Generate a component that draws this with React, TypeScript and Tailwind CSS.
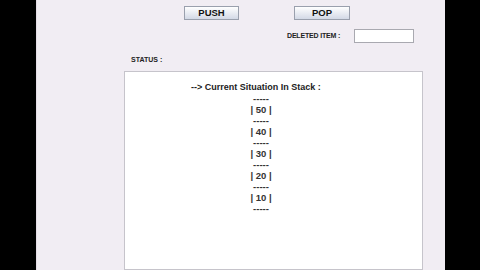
const STACK = [50, 40, 30, 20, 10];

export default function App() {
  return (
    <div
      className="flex h-[270px] w-[480px] overflow-hidden bg-black text-black"
      style={{ fontFamily: '"Liberation Sans", Arial, sans-serif' }}
    >
      <div className="w-[36px] shrink-0 bg-black" />

      <div className="flex w-[409px] flex-col bg-[#f1edf3] border-l border-[#e4dde6]">
        {/* buttons */}
        <div className="flex pt-[6px] pl-[147px]">
          <button className="h-[14px] w-[55px] border border-[#9aa0ad] bg-gradient-to-b from-white to-[#d3d9e6] text-[9.5px] leading-none font-bold text-[#111]">
            PUSH
          </button>
          <button className="ml-[55px] h-[14px] w-[56px] border border-[#9aa0ad] bg-gradient-to-b from-white to-[#d3d9e6] text-[9.5px] leading-none font-bold text-[#111]">
            POP
          </button>
        </div>

        {/* deleted item */}
        <div className="mt-[9px] flex items-center pl-[250px]">
          <span className="text-[7px] font-bold tracking-tight text-[#222]">DELETED ITEM :</span>
          <div className="ml-[14px] h-[14px] w-[60px] border border-[#a9a9b0] bg-white" />
        </div>

        {/* status */}
        <div className="mt-[12px] pl-[94px] text-[7px] font-bold text-[#222]">STATUS :</div>

        {/* stack box */}
        <div className="mt-[5px] ml-[87px] flex w-[299px] flex-1 flex-col border border-[#c6c4cb] bg-white pt-[10px]">
          <div className="pl-[66px] text-[9px] font-bold leading-[11px] text-[#222]">
            --&gt; Current Situation In Stack :
          </div>
          <div className="flex w-[272px] flex-col items-center text-[9.5px] font-bold leading-[11px] text-[#333]">
            <span>-----</span>
            {STACK.map(n => (
              <div key={n} className="flex flex-col items-center">
                <span>| {n} |</span>
                <span>-----</span>
              </div>
            ))}
          </div>
        </div>
      </div>

      <div className="flex-1 bg-black" />
    </div>
  );
}
